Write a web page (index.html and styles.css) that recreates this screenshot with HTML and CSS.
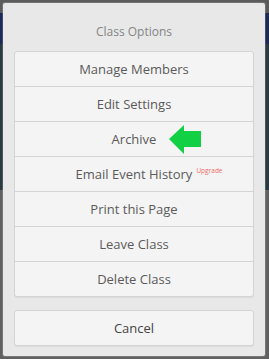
FILE: index.html
```html
<!DOCTYPE html>
<html lang="en">
<head>
  <meta charset="UTF-8" />
  <title>Class Options</title>
  <link rel="stylesheet" href="styles.css">
</head>
<body>

<div class="backdrop">
  <div class="sheet">
    <div class="sheet-title">Class Options</div>

    <div class="option-group">
      <div class="option">Manage Members</div>
      <div class="option">Edit Settings</div>
      <div class="option option-marked">
        Archive
        <!-- green pointer arrow -->
        <svg class="pointer" width="33" height="30" viewBox="0 0 33 30">
          <polygon points="0,14 15,0 15,6 32,6 32,22 15,22 15,29" fill="#12d044"/>
        </svg>
      </div>
      <div class="option"><span class="label">Email Event History<sup class="upgrade">Upgrade</sup></span></div>
      <div class="option">Print this Page</div>
      <div class="option">Leave Class</div>
      <div class="option">Delete Class</div>
    </div>

    <div class="option-group">
      <div class="option option-cancel">Cancel</div>
    </div>
  </div>
</div>

</body>
</html>
```

FILE: styles.css
```css
:root {
  --sheet: #e8e8e8;
  --button: #f4f4f4;
  --line: #d4d4d4;
  --text: #5a5a5a;
}

body {
  margin: 0;
  font-family: 'Open Sans', sans-serif;
  background: linear-gradient(#5b5b5b 0, #5b5b5b 13px, #1e2a55 13px, #1e2a55 44px, #2b3a40 44px, #2b3a40 190px, #616161 190px);
  height: 359px;
  overflow: hidden;
}

.backdrop {
  padding: 3px 4px 3px 3px;
}

.sheet {
  background: var(--sheet);
  border-radius: 2px;
  padding: 21px 11px 10px;
  height: 322px;
  box-shadow: 0 0 0 1px rgba(255,255,255,0.15);
}

.sheet-title {
  text-align: center;
  color: #858585;
  font-size: 12px;
  line-height: 16px;
  margin-bottom: 11px;
}

.option-group {
  background: var(--button);
  border: 1px solid var(--line);
  border-radius: 3px;
  box-shadow: 0 1px 1px rgba(0,0,0,0.06);
}

.option-group + .option-group {
  margin-top: 13px;
}

.option {
  position: relative;
  height: 34px;
  display: flex;
  align-items: center;
  justify-content: center;
  color: var(--text);
  font-size: 13px;
  border-top: 1px solid var(--line);
}

.option:first-child {
  border-top: none;
}

.option-cancel {
  color: #444;
}

.label {
  position: relative;
}

.pointer {
  position: absolute;
  left: 154px;
  top: 3px;
}

.upgrade {
  position: absolute;
  left: 100%;
  top: 1px;
  margin-left: 4px;
  color: #f06a6a;
  font-size: 6.5px;
  white-space: nowrap;
}
```
